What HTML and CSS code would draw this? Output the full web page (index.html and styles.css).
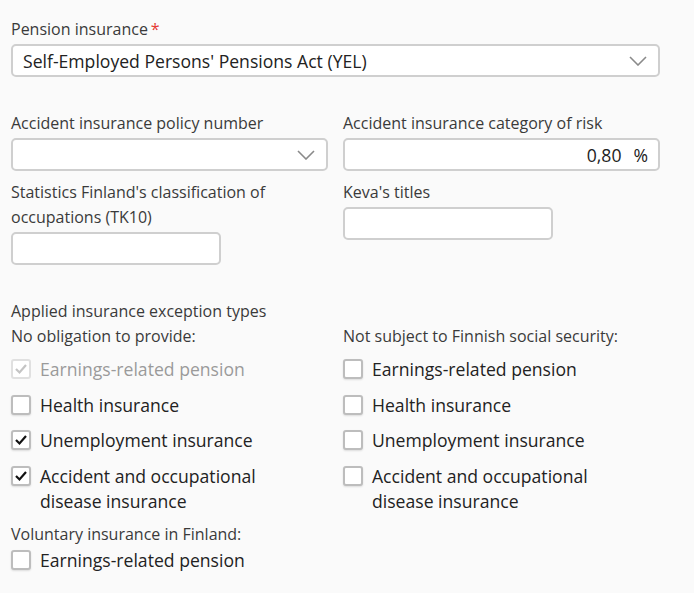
FILE: index.html
```html
<!DOCTYPE html>
<html lang="en">
<head>
<meta charset="utf-8">
<link rel="stylesheet" href="styles.css">
</head>
<body>
<div class="form">
  <div class="field full">
    <label class="lbl">Pension insurance<span class="req">*</span></label>
    <div class="control select">
      <span class="value">Self-Employed Persons' Pensions Act (YEL)</span>
      <svg class="chev" width="18" height="10" viewBox="0 0 18 10"><path d="M1 1 L9 9 L17 1" fill="none" stroke="#8a8a8a" stroke-width="1.6"/></svg>
    </div>
  </div>

  <div class="grid two">
    <div class="field">
      <label class="lbl">Accident insurance policy number</label>
      <div class="control select">
        <span class="value"></span>
        <svg class="chev" width="18" height="10" viewBox="0 0 18 10"><path d="M1 1 L9 9 L17 1" fill="none" stroke="#8a8a8a" stroke-width="1.6"/></svg>
      </div>
    </div>
    <div class="field">
      <label class="lbl">Accident insurance category of risk</label>
      <div class="control num">
        <span class="value">0,80</span><span class="unit">%</span>
      </div>
    </div>
    <div class="field">
      <label class="lbl">Statistics Finland's classification of occupations (TK10)</label>
      <div class="control short"></div>
    </div>
    <div class="field">
      <label class="lbl">Keva's titles</label>
      <div class="control short"></div>
    </div>
  </div>

  <div class="exceptions">
    <div class="lbl">Applied insurance exception types</div>
    <div class="grid two checks">
      <div class="group">
        <div class="lbl">No obligation to provide:</div>
        <ul class="list">
          <li class="cb disabled"><span class="box checked"><svg width="14" height="12" viewBox="0 0 14 12"><path d="M2 6 L5.5 9.5 L12 2" fill="none" stroke="currentColor" stroke-width="2.2"/></svg></span><span class="txt">Earnings-related pension</span></li>
          <li class="cb"><span class="box"></span><span class="txt">Health insurance</span></li>
          <li class="cb"><span class="box checked"><svg width="14" height="12" viewBox="0 0 14 12"><path d="M2 6 L5.5 9.5 L12 2" fill="none" stroke="currentColor" stroke-width="2.2"/></svg></span><span class="txt">Unemployment insurance</span></li>
          <li class="cb"><span class="box checked"><svg width="14" height="12" viewBox="0 0 14 12"><path d="M2 6 L5.5 9.5 L12 2" fill="none" stroke="currentColor" stroke-width="2.2"/></svg></span><span class="txt">Accident and occupational<br>disease insurance</span></li>
        </ul>
      </div>
      <div class="group">
        <div class="lbl">Not subject to Finnish social security:</div>
        <ul class="list">
          <li class="cb"><span class="box"></span><span class="txt">Earnings-related pension</span></li>
          <li class="cb"><span class="box"></span><span class="txt">Health insurance</span></li>
          <li class="cb"><span class="box"></span><span class="txt">Unemployment insurance</span></li>
          <li class="cb"><span class="box"></span><span class="txt">Accident and occupational<br>disease insurance</span></li>
        </ul>
      </div>
    </div>
    <div class="group">
      <div class="lbl">Voluntary insurance in Finland:</div>
      <ul class="list tight">
        <li class="cb"><span class="box"></span><span class="txt">Earnings-related pension</span></li>
      </ul>
    </div>
  </div>
</div>
</body>
</html>
```

FILE: styles.css
```css
* { box-sizing: border-box; }
html, body { margin: 0; padding: 0; }
body {
  background: #fafafa;
  font-family: "Open Sans", "Noto Sans", sans-serif;
  color: #333;
}
.form {
  width: 649px;
  margin-left: 11px;
  padding-top: 17px;
}
.lbl {
  display: block;
  font-size: 16px;
  line-height: 25px;
  color: #3a3a3a;
}
.req { color: #e53935; margin-left: 3px; }
.field .lbl { margin-bottom: 2px; }
.full { margin-bottom: 34px; }
.grid.two {
  display: grid;
  grid-template-columns: 317px 317px;
  column-gap: 15px;
  row-gap: 9px;
}
.control {
  height: 33px;
  background: #fff;
  border: 2px solid #cfcfcf;
  border-radius: 5px;
  display: flex;
  align-items: center;
  padding: 0 10px;
  font-size: 17.6px;
  color: #222;
}
.select { justify-content: space-between; }
.select .chev { margin-right: 1px; }
.num { justify-content: flex-end; }
.num .unit { margin-left: 12px; }
.short { width: 210px; }
.exceptions { margin-top: 34px; }
.checks { row-gap: 0; }
.list { list-style: none; margin: 8px 0 0; padding: 0; }
.list.tight { margin-top: 1px; }
.cb {
  display: flex;
  align-items: flex-start;
  font-size: 17.6px;
  line-height: 25px;
  color: #222;
  margin-bottom: 10.5px;
}
.checks .cb:last-child { margin-bottom: 8.5px; }
.box {
  flex: none;
  width: 20px;
  height: 20px;
  margin-top: 2px;
  margin-right: 9px;
  background: #fff;
  border: 2px solid #bdbdbd;
  border-radius: 3px;
  box-shadow: 0 1px 2px rgba(0,0,0,0.12);
  display: flex;
  align-items: center;
  justify-content: center;
  color: #111;
}
.cb.disabled { color: #9a9a9a; }
.cb.disabled .box { border-color: #e0e0e0; color: #c4c4c4; box-shadow: none; }
```
